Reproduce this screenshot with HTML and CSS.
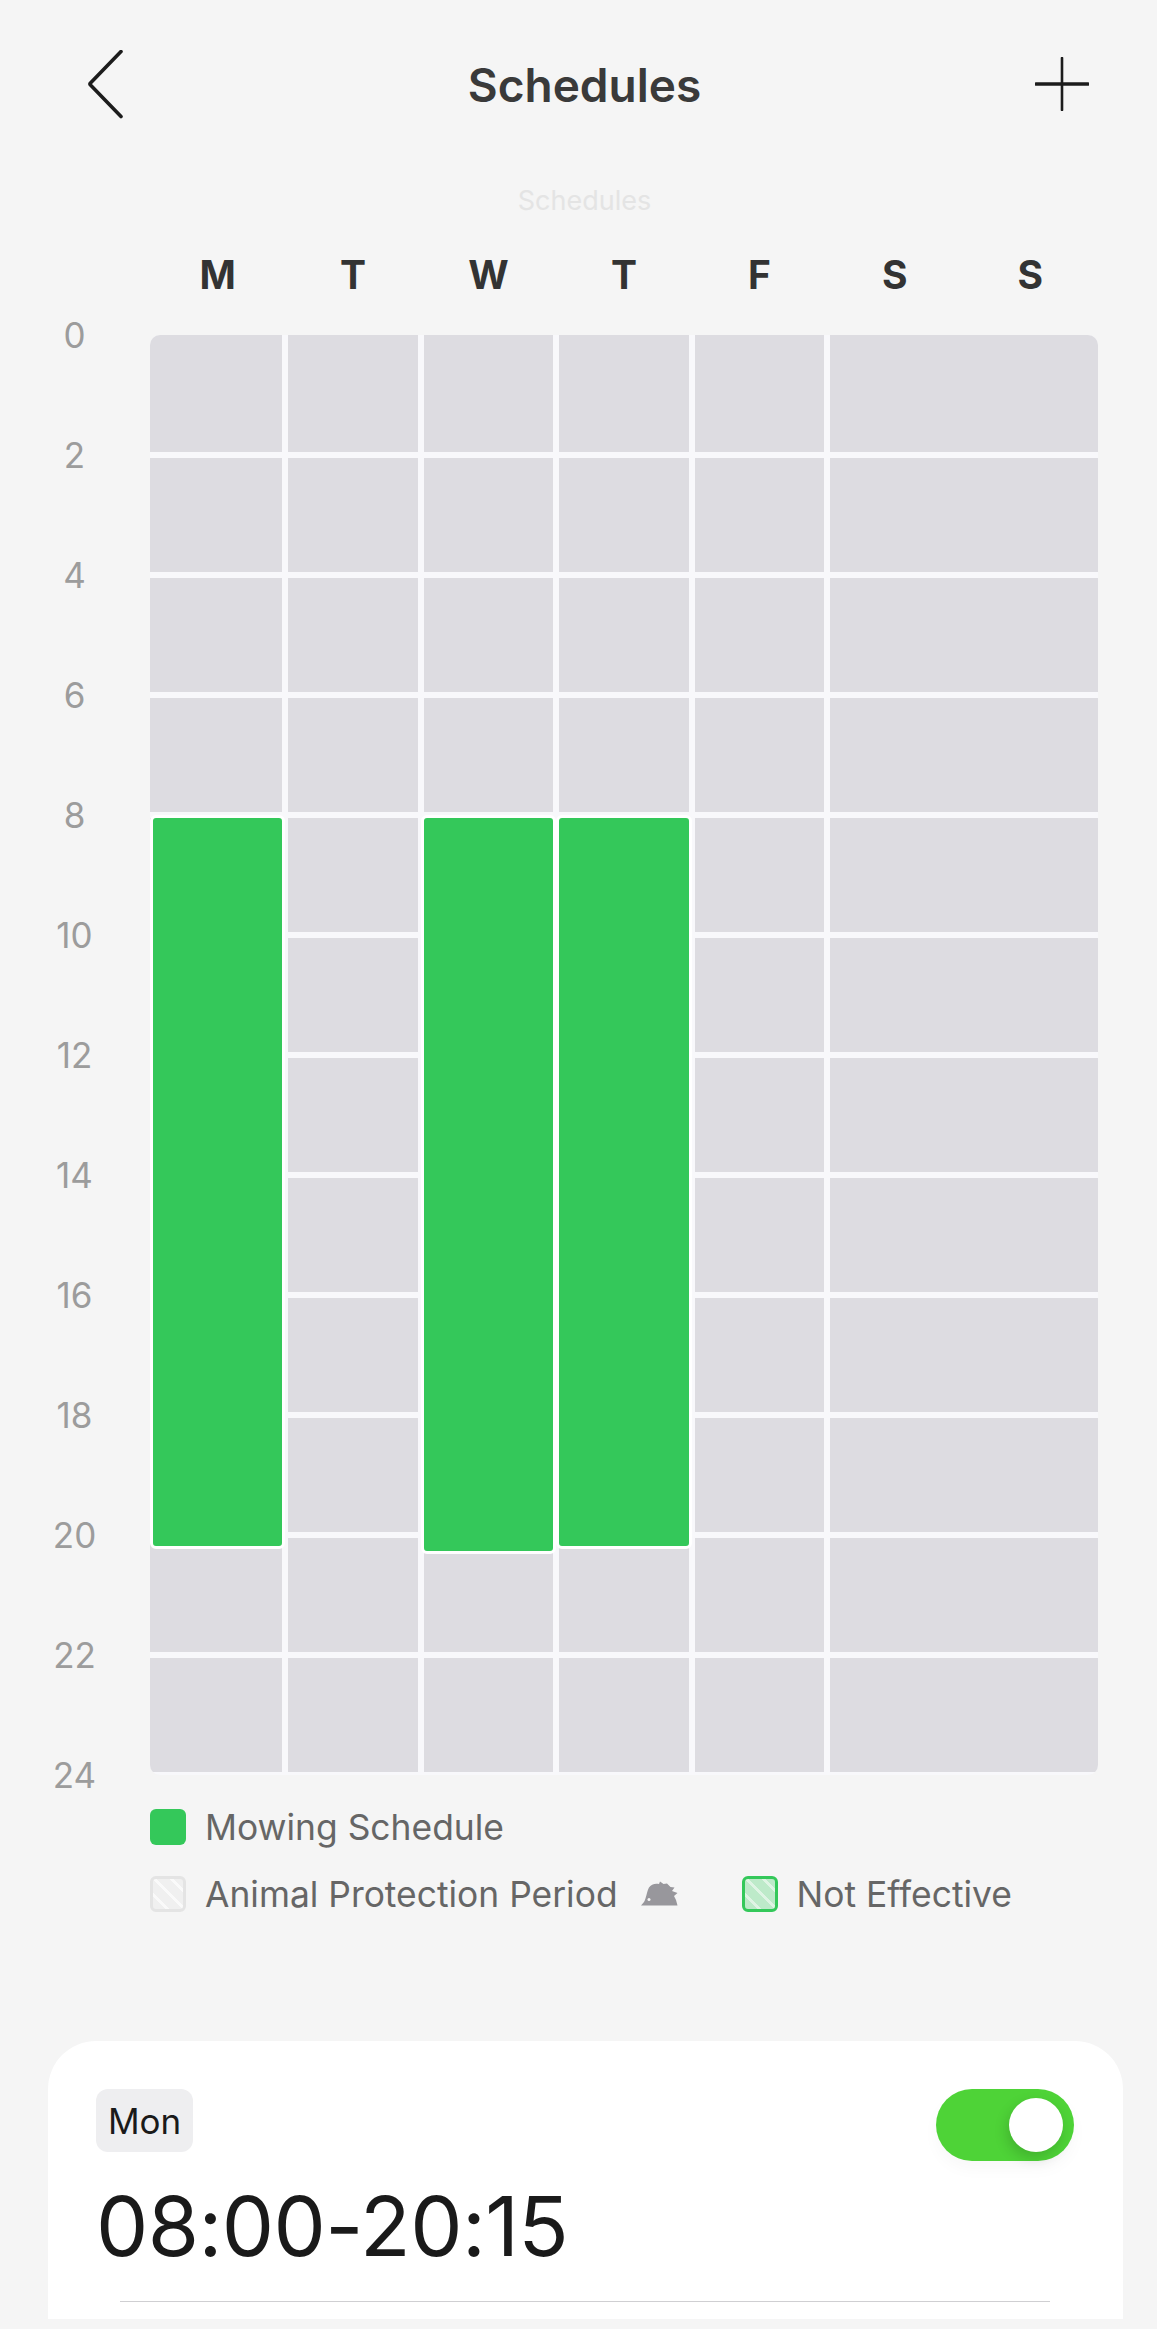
FILE: index.html

```html
<!DOCTYPE html>
<html lang="en">
<head>
    <meta charset="UTF-8">
    <meta name="viewport" content="width=device-width, initial-scale=1.0">
    <title>Schedules</title>
    <link rel="stylesheet" href="styles.css">
</head>
<body>
    <!-- Top bar -->
    <div class="top-bar">
        <svg class="back-icon" width="38" height="70" viewBox="0 0 38 70">
            <path d="M34 1.5 L3.5 33 Q2.5 34 3.5 35 L34 66.5" fill="none" stroke="#1c1c1c" stroke-width="3.6" stroke-linecap="round"/>
        </svg>
        <h1>Schedules</h1>
        <svg class="add-icon" width="54" height="54" viewBox="0 0 54 54">
            <path d="M27 1 V53" stroke="#1c1c1c" stroke-width="2.6" stroke-linecap="round"/>
            <path d="M1 27 H53" stroke="#1c1c1c" stroke-width="3.6" stroke-linecap="round"/>
        </svg>
    </div>

    <p class="sub-title">Schedules</p>

    <!-- Week chart -->
    <div class="days">
        <span>M</span><span>T</span><span>W</span><span>T</span><span>F</span><span>S</span><span>S</span>
    </div>
    <div class="chart">
        <div class="hours">
            <span>0</span><span>2</span><span>4</span><span>6</span><span>8</span><span>10</span><span>12</span>
            <span>14</span><span>16</span><span>18</span><span>20</span><span>22</span><span>24</span>
        </div>
        <div class="grid-wrap">
            <div class="grid" id="grid"></div>
            <div class="block block-mon"></div>
            <div class="block block-wed"></div>
            <div class="block block-thu"></div>
        </div>
    </div>

    <!-- Legend -->
    <div class="legend">
        <div class="legend-row">
            <span class="swatch swatch-on"></span>
            <span>Mowing Schedule</span>
        </div>
        <div class="legend-row">
            <span class="swatch swatch-animal"></span>
            <span>Animal Protection Period</span>
            <svg class="hedgehog" width="38" height="26" viewBox="0 0 38 26">
                <path d="M0 24.5 L3 21 C5 18 6 10 8 6.5 C10 3.5 14 2 18 3 L19 0.5 L22.5 3 L26 2.5 L29.5 6 L33.5 6.5 L31 10 L36.5 12 L33 15 L35 19 L36.5 24.5 Z" fill="#98979c"/>
                <circle cx="8" cy="18.5" r="1.5" fill="#f5f5f5"/>
            </svg>
            <span class="swatch swatch-off"></span>
            <span>Not Effective</span>
        </div>
    </div>

    <!-- Selected period -->
    <div class="card">
        <div class="card-top">
            <span class="day-tag">Mon</span>
            <span class="toggle"><span class="knob"></span></span>
        </div>
        <div class="time">08:00-20:15</div>
        <div class="divider"></div>
    </div>

    <script>
        // 12 rows of two hours each, last two days share one cell
        const grid = document.getElementById('grid');
        for (let row = 0; row < 12; row++) {
            for (let col = 0; col < 6; col++) {
                const cell = document.createElement('div');
                cell.className = 'cell';
                grid.appendChild(cell);
            }
        }
    </script>
</body>
</html>
```

FILE: styles.css

```css
html, body {
    margin: 0;
    padding: 0;
    height: 2329px;
    overflow: hidden;
    background-color: #f5f5f5;
    font-family: Inter, "Noto Sans", sans-serif;
}
.top-bar {
    display: grid;
    grid-template-columns: 1fr auto 1fr;
    align-items: center;
    height: 70px;
    padding: 50px 68px 0 80px;
}
.top-bar h1 {
    margin: 0;
    font-size: 46px;
    font-weight: 600;
    color: #3a3a3a;
}
.back-icon {
    margin-left: 7px;
}
.add-icon {
    justify-self: end;
    margin-top: -2px;
}
.sub-title {
    margin: 0;
    padding: 62px 0 0 12px;
    height: 38px;
    line-height: 38px;
    text-align: center;
    font-size: 27px;
    color: #e4e4e4;
}
.days {
    display: grid;
    grid-template-columns: repeat(7, 135.43px);
    margin: 30px 0 0 150px;
    height: 85px;
    line-height: 50px;
    font-size: 39px;
    font-weight: 700;
    color: #333;
    text-align: center;
}
.chart {
    display: flex;
}
.hours {
    display: flex;
    flex-direction: column;
    justify-content: space-between;
    align-items: center;
    width: 149px;
    height: 1440px;
    font-size: 35px;
    color: #9c9c9c;
}
.hours span {
    display: flex;
    align-items: center;
    height: 0;
}
.grid-wrap {
    position: relative;
    width: 948px;
    height: 1440px;
    margin-left: 1px;
}
.grid {
    display: grid;
    grid-template-columns: 132px 130px 129px 130px 129px 268px;
    grid-template-rows: 117px repeat(11, 114px);
    gap: 6px;
    height: 1437px;
    padding-bottom: 3px;
    background-color: #f8f8fb;
    border-radius: 10px;
    overflow: hidden;
}
.cell {
    background-color: #dddce1;
}
.block {
    position: absolute;
    top: 480px;
    width: 129px;
    height: 728px;
    background-color: #34c85a;
    border: 3px solid #fff;
    border-radius: 6px;
}
.block-mon {
    left: 0;
}
.block-wed {
    left: 271px;
    height: 733px;
}
.block-thu {
    left: 406px;
    width: 130px;
}
.legend {
    margin: 34px 0 0 150px;
    font-size: 35.4px;
    color: #666;
}
.legend-row {
    display: flex;
    align-items: center;
    height: 36px;
    margin-bottom: 31px;
}
.swatch {
    box-sizing: border-box;
    flex: none;
    width: 36px;
    height: 36px;
    margin-right: 19px;
    border-radius: 6px;
}
.swatch-on {
    background-color: #34c85a;
}
.swatch-animal {
    border: 3px solid #e4e4e4;
    background: repeating-linear-gradient(45deg, #f0f0f0 0 9px, #fafafa 9px 12px);
}
.swatch-off {
    border: 3px solid #34c85a;
    background: repeating-linear-gradient(45deg, #bdeac9 0 9px, #dff4e4 9px 12px);
}
.hedgehog {
    margin: 0 63px 0 23px;
}
.card {
    box-sizing: border-box;
    width: 1075px;
    height: 278px;
    margin: 129px 0 0 48px;
    padding: 48px 49px 0 48px;
    background-color: #fff;
    border-radius: 48px 48px 0 0;
}
.card-top {
    display: flex;
    justify-content: space-between;
    align-items: flex-start;
}
.day-tag {
    display: flex;
    align-items: center;
    box-sizing: border-box;
    height: 63px;
    padding: 0 12px;
    font-size: 35px;
    color: #1a1a1a;
    background-color: #eeeef0;
    border-radius: 12px;
}
.toggle {
    display: flex;
    justify-content: flex-end;
    align-items: center;
    box-sizing: border-box;
    width: 138px;
    height: 72px;
    padding-right: 11px;
    background-color: #4ed337;
    border-radius: 36px;
    box-shadow: 0 8px 16px rgba(0, 0, 0, 0.03);
}
.knob {
    width: 54px;
    height: 54px;
    background-color: #fff;
    border-radius: 50%;
    box-shadow: -2px 6px 14px rgba(0, 0, 0, 0.16);
}
.time {
    margin-top: 15px;
    height: 100px;
    line-height: 100px;
    font-size: 83px;
    letter-spacing: -0.6px;
    color: #1a1a1a;
}
.divider {
    height: 1px;
    margin: 25px 24px 0 24px;
    background-color: #cfcfd2;
}
```
